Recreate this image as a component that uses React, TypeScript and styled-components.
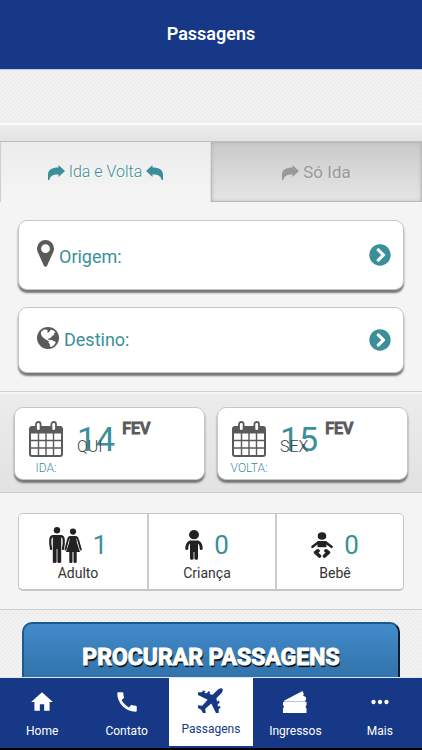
import React from "react";
import styled, { createGlobalStyle, css } from "styled-components";
import { MdHome, MdCall, MdMoreHoriz } from "react-icons/md";
import { FaChevronCircleRight } from "react-icons/fa";

const navy = "#163886";
const teal = "#3b8f98";
const ink = "#5a5a5a";

const Global = createGlobalStyle`
  * { box-sizing: border-box; }
  body { margin: 0; font-family: Roboto, "Liberation Sans", sans-serif; background: #f4f4f4; }
  button { font: inherit; color: inherit; border: 0; padding: 0; margin: 0; background: none; cursor: pointer; }
  svg { display: block; flex: none; }
`;

const Screen = styled.div`
  height: 100vh;
  display: flex;
  flex-direction: column;
  overflow: hidden;
`;

const Header = styled.header`
  flex: none;
  height: 70px;
  padding-bottom: 2px;
  display: flex;
  align-items: center;
  justify-content: center;
  background: ${navy};
  border-bottom: 1px solid #b9c8ee;
`;

const Title = styled.h1`
  margin: 0;
  font-size: 18px;
  line-height: 22px;
  font-weight: 600;
  color: #fff;
`;

const Content = styled.main`
  flex: 1;
  min-height: 0;
  overflow-y: auto;
  scrollbar-width: none;
`;

const weave = css`
  background-color: #f1f1f1;
  background-image: repeating-conic-gradient(#ededed 0 25%, #f2f2f2 0 50%);
  background-size: 4px 4px;
`;

const Banner = styled.div`
  height: 55px;
  ${weave}
  border-bottom: 2px solid #fcfcfc;
`;

const Strip = styled.div`
  height: 17px;
  background: linear-gradient(#ededed, #e3e3e3);
  border-bottom: 1px solid #bdbdbd;
`;

const Tabs = styled.div`
  display: grid;
  grid-template-columns: 1fr 1fr;
`;

const Tab = styled.button<{ $active?: boolean }>`
  height: 60px;
  display: flex;
  align-items: center;
  justify-content: center;
  gap: 4px;
  font-size: ${(p) => (p.$active ? 16 : 17)}px;
  line-height: 20px;
  font-weight: ${(p) => (p.$active ? 300 : 400)};
  color: ${(p) => (p.$active ? teal : "#999")};
  text-shadow: 1px 1px 1px ${(p) => (p.$active ? "#fff" : "#e4e4e4")};
  background: ${(p) => (p.$active ? "linear-gradient(#ececec, #f5f5f5)" : "linear-gradient(#cacaca, #e6e6e6)")};
  box-shadow: ${(p) =>
    p.$active
      ? "inset 2px 0 1px -1px #ccc, inset -2px 0 1px -1px #ddd"
      : "inset 0 0 5px 0 #b0b0b0, inset 0 0 1px 1px #c4c4c4"};
`;

const Places = styled.section`
  display: flex;
  flex-direction: column;
  gap: 17px;
  padding: 18px;
  background: #f4f4f4;
`;

const raised = css`
  background: #fff;
  border: 1px solid #c6c6c6;
  border-radius: 9px;
  box-shadow: 0 3px 2px #777;
`;

const Place = styled.button<{ $tall?: boolean }>`
  ${raised}
  height: ${(p) => (p.$tall ? 70 : 66)}px;
  display: flex;
  align-items: center;
  gap: 5px;
  padding: 0 12px 0 18px;
  font-size: 18px;
  line-height: 24px;
  color: ${teal};
  text-align: left;
`;

const PlaceIcon = styled.span`
  padding-bottom: 4px;
`;

const PlaceLabel = styled.span<{ $tall?: boolean }>`
  flex: 1;
  padding-top: ${(p) => (p.$tall ? 4 : 0)}px;
`;

const Dates = styled.section`
  display: grid;
  grid-template-columns: 1fr 1fr;
  gap: 12px;
  padding: 15px 14px 12px;
  background: linear-gradient(#ececec, #e2e2e2);
  border-top: 1px solid #cfcfcf;
  border-bottom: 1px solid #cfcfcf;
  box-shadow: inset 0 2px 0 #f6f6f6;
`;

const DateCard = styled.button`
  ${raised}
  height: 73px;
  display: flex;
  align-items: flex-start;
  padding: 13px 14px 0;
  text-align: left;
`;

const DateIcon = styled.span`
  flex: none;
  width: 34px;
  display: flex;
  flex-direction: column;
  align-items: center;
  gap: 4px;
`;

const Caption = styled.span`
  font-size: 12px;
  line-height: 14px;
  font-weight: 300;
  color: ${teal};
  white-space: nowrap;
`;

const Day = styled.span`
  position: relative;
  margin-left: 14px;
  font-size: 34px;
  line-height: 36px;
  color: ${teal};
`;

const Weekday = styled.span`
  position: absolute;
  left: 0;
  top: 17px;
  font-size: 16px;
  line-height: 18px;
  font-weight: 300;
  color: #444;
`;

const Month = styled.span`
  margin-left: 7px;
  font-size: 16px;
  line-height: 16px;
  font-weight: 500;
  -webkit-text-stroke: 1px ${ink};
  color: ${ink};
`;

const People = styled.section`
  padding: 20px 18px 18px;
  background: #f4f4f4;
  border-bottom: 1px solid #cfcfcf;
`;

const PeopleRow = styled.div`
  display: grid;
  grid-template-columns: repeat(3, 1fr);
  background: #fff;
  border: 1px solid #c6c6c6;
  border-bottom-width: 2px;
  border-radius: 5px;
`;

const Person = styled.button`
  height: 75px;
  padding: 13px 10px 0 0;
  display: flex;
  flex-direction: column;
  align-items: center;
  & + & { border-left: 2px solid #ccc; }
`;

const Count = styled.span`
  height: 36px;
  display: flex;
  align-items: center;
  gap: 11px;
  font-size: 26px;
  line-height: 36px;
  color: ${teal};
`;

const PersonLabel = styled.span`
  font-size: 14px;
  line-height: 20px;
  color: #333;
`;

const SearchArea = styled.section`
  ${weave}
  padding: 12px 22px;
`;

const Search = styled.button`
  width: 100%;
  height: 72px;
  border: 2px solid #1d5a8c;
  border-right-color: #0d1c2c;
  border-radius: 10px;
  background: linear-gradient(#428bca, #2d6ca2);
  color: #fff;
  font-size: 23px;
  line-height: 28px;
  font-weight: 700;
  -webkit-text-stroke: 1px #fff;
  text-shadow: 1px 2px 1px #000;
  white-space: nowrap;
`;

const Nav = styled.nav`
  flex: none;
  display: grid;
  grid-template-columns: repeat(5, 1fr);
  background: ${navy};
  border-top: 1px solid #dfe5f4;
  border-bottom: 2px solid #000;
`;

const NavItem = styled.a<{ $active?: boolean }>`
  height: 70px;
  padding-top: ${(p) => (p.$active ? 9 : 11)}px;
  display: flex;
  flex-direction: column;
  align-items: center;
  gap: 8px;
  font-size: 12px;
  line-height: 16px;
  font-weight: 400;
  text-decoration: none;
  color: ${(p) => (p.$active ? navy : "#fff")};
  background: ${(p) => (p.$active ? "#fff" : navy)};
  border-bottom: 2px solid ${navy};
`;

const Flipped = styled.svg`
  transform: scaleX(-1);
`;

const arrow = "M17 6 10.5 0V2.6C4 2.6 0 4.600 0 10V15H1.400C2.200 11.500 4 9.600 10.500 9.600V12Z";

const ForwardArrow = () => (
  <svg width="17" height="15" viewBox="0 0 17 15" fill="currentColor"><path d={arrow} /></svg>
);
const BackArrow = () => (
  <Flipped width="17" height="15" viewBox="0 0 17 15" fill="currentColor"><path d={arrow} /></Flipped>
);

const Pin = () => (
  <svg width="17" height="27" viewBox="0 0 17 27" fill={ink}>
    <path fillRule="evenodd" d="M8.500 0A8.500 8.500 0 0 0 0 8.500c0 2 .6 3.300 1.300 4.800L6.800 25.500q.6 1.300 1.700 1.300t1.700-1.300L15.700 13.300C16.400 11.800 17 10.500 17 8.500A8.500 8.500 0 0 0 8.500 0Zm0 4.300a4.400 4.400 0 1 1 0 8.800a4.400 4.400 0 0 1 0-8.800Z" />
  </svg>
);

const Globe = () => (
  <svg width="22" height="22" viewBox="0 0 22 22">
    <circle cx="11" cy="11" r="11" fill={ink} />
    <path fill="#fff" d="M4 5 7 2.500l3 .3 1 1.400-1.500 1 2 .3L13 4l1-1.500 3 1.200 1.500 2-2 .8 1 1.500-2.500.8-.8 1.700-2.200 1L10.500 12l1.300.8 1.500.2-.3 1.500-2.500-1L8 12 5.500 10 4 7.500Z" />
    <path fill="#fff" d="m12 13.500 2.500-.8 2.500 1.500 2 .8-2 3.200-2.700 1.800-1.300-.5-.3-2.500-1.200-1.500Z" />
  </svg>
);

const Calendar = () => (
  <svg width="34" height="36" viewBox="0 0 34 36">
    <rect x="1" y="6" width="32" height="29" rx="2" fill="#fff" stroke={ink} strokeWidth="2" />
    <path fill={ink} d="M1 7h32v5.500H1Z" />
    <path fill="none" stroke={ink} strokeWidth="1.400" d="M2 19.500h30M2 27h30M9.500 12v22M17 12v22M24.500 12v22" />
    <rect x="7" y="1" width="4.600" height="9" rx="2.300" fill="#fff" stroke={ink} strokeWidth="1.800" />
    <rect x="22.400" y="1" width="4.600" height="9" rx="2.300" fill="#fff" stroke={ink} strokeWidth="1.800" />
  </svg>
);

const Adults = () => (
  <svg width="33" height="36" viewBox="0 0 33 36" fill="#222" stroke="#222" strokeLinecap="round" strokeLinejoin="round">
    <circle cx="8" cy="3.300" r="3.200" stroke="none" />
    <path stroke="none" d="M3.800 8h8.400v27q0 1-1.900 1T8.400 35V22h-.8v13q0 1-1.900 1T3.800 35Z" />
    <path fill="none" strokeWidth="2.200" d="M4 9Q1.300 9.500 1.300 13v4l.8 5M12 9q2.700.5 2.700 4v4l-.8 5" />
    <circle cx="24" cy="4.600" r="3.100" stroke="none" />
    <path stroke="none" d="M21 9h6l1 7 3 9h-3.300v10q0 1-1.600 1t-1.600-1V25h-1v10q0 1-1.600 1t-1.600-1V25H17l3-9Z" />
    <path fill="none" strokeWidth="1.900" d="M21 10q-1.500.3-2 2.500l-2.500 10M27 10q1.500.3 2 2.500l2.800 10" />
  </svg>
);

const Child = () => (
  <svg width="18" height="30" viewBox="0 0 18 30" fill="#222" stroke="#222" strokeLinecap="round">
    <ellipse cx="9" cy="4.700" rx="5" ry="4.600" stroke="none" />
    <path stroke="none" d="M5 10.500h8v18q0 1.200-1.800 1.200T9.400 28.500V22h-.8v6.500q0 1.200-1.800 1.200T5 28.500Z" />
    <path fill="none" strokeWidth="3" d="M4.800 12Q1.800 13.500 1.800 18.500M13.200 12q3 1.500 3 6.500" />
  </svg>
);

const Baby = () => (
  <svg width="22" height="26" viewBox="0 0 22 26" fill="#222" stroke="#222" strokeLinecap="round" strokeLinejoin="round">
    <ellipse cx="11" cy="4" rx="4.300" ry="3.800" stroke="none" />
    <path stroke="none" d="M6.500 9h9v6.200h-9Z" />
    <path fill="none" strokeWidth="2.600" d="m7.500 10.300-6 4.500M14.500 10.300l6 4.500" />
    <path fill="none" strokeWidth="3.600" d="m7 18.800-2.400 1.700 3.900 3.500M15 18.800l2.400 1.700-3.900 3.500" />
  </svg>
);

const Plane = () => (
  <svg width="26" height="26" viewBox="0 0 26 26" fill="currentColor">
    <g transform="rotate(45 13 13)">
      <path d="M13-3C14.800-3 15.600 0 15.600 2v6l3 2V8.200h2.200v3.200l2 1.400v-1.600H25v3L28 17v2.500l-12.400-4.300-.5 8 4.400 3.600v2L13 26.900l-6.500 1.900v-2l4.400-3.600-.5-8L-2 19.500V17l3-2.800v-3h2.200v1.600l2-1.400V8.200h2.200V10l3-2V2C10.400 0 11.200-3 13-3Z" />
    </g>
  </svg>
);

const Tickets = () => (
  <svg width="26" height="26" viewBox="0 0 26 26" fill="currentColor">
    <path d="M1.500 12 20.500 2l1.300 3-.6 1.800 2.600 1.200.4 2-1 2Z" />
    <path d="M1 13h23.500v3l-1 1.700 1 1.800V24H1v-4.500l1-1.800L1 16Z" />
    <path stroke="currentColor" strokeOpacity=".7" d="M2 12.500h21.500" />
  </svg>
);

const places = [
  { label: "Origem:", icon: <Pin />, tall: true },
  { label: "Destino:", icon: <Globe />, tall: false },
];
const dates = [
  { caption: "IDA:", day: "14", month: "FEV", weekday: "QUI" },
  { caption: "VOLTA:", day: "15", month: "FEV", weekday: "SEX" },
];
const people = [
  { label: "Adulto", count: 1, icon: <Adults /> },
  { label: "Criança", count: 0, icon: <Child /> },
  { label: "Bebê", count: 0, icon: <Baby /> },
];
const nav = [
  { label: "Home", icon: <MdHome size={26} /> },
  { label: "Contato", icon: <MdCall size={26} /> },
  { label: "Passagens", icon: <Plane />, active: true },
  { label: "Ingressos", icon: <Tickets /> },
  { label: "Mais", icon: <MdMoreHoriz size={26} /> },
];

export default function App() {
  return (
    <Screen>
      <Global />
      <Header><Title>Passagens</Title></Header>
      <Content>
        <Banner />
        <Strip />
        <Tabs role="tablist">
          <Tab role="tab" aria-selected="true" $active><ForwardArrow />Ida e Volta<BackArrow /></Tab>
          <Tab role="tab" aria-selected="false"><ForwardArrow />Só Ida</Tab>
        </Tabs>
        <Places>
          {places.map((p) => (
            <Place key={p.label} $tall={p.tall}>
              <PlaceIcon>{p.icon}</PlaceIcon>
              <PlaceLabel $tall={p.tall}>{p.label}</PlaceLabel>
              <FaChevronCircleRight size={22} />
            </Place>
          ))}
        </Places>
        <Dates>
          {dates.map((d) => (
            <DateCard key={d.caption}>
              <DateIcon><Calendar /><Caption>{d.caption}</Caption></DateIcon>
              <Day>{d.day}<Weekday>{d.weekday}</Weekday></Day>
              <Month>{d.month}</Month>
            </DateCard>
          ))}
        </Dates>
        <People>
          <PeopleRow>
            {people.map((p) => (
              <Person key={p.label}>
                <Count>{p.icon}{p.count}</Count>
                <PersonLabel>{p.label}</PersonLabel>
              </Person>
            ))}
          </PeopleRow>
        </People>
        <SearchArea><Search>PROCURAR PASSAGENS</Search></SearchArea>
      </Content>
      <Nav>
        {nav.map((n) => (
          <NavItem key={n.label} href="#" $active={n.active}>{n.icon}{n.label}</NavItem>
        ))}
      </Nav>
    </Screen>
  );
}
